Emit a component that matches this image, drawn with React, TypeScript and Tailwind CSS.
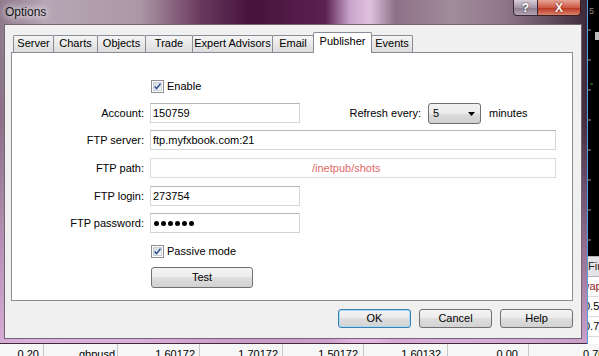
import React from "react";

const CheckBox = () => (
  <div className="w-[13px] h-[13px] shrink-0 border border-[#8e8f8f] bg-white p-px">
    <div className="w-full h-full border border-[#c9cfd7] bg-[linear-gradient(135deg,#d3dbe5,#f7f9fb)] flex items-center justify-center">
      <svg width="9" height="9" viewBox="0 0 9 9">
        <path d="M0.8 4.4 L3.3 7.2 L8.3 0.8" stroke="#2e4f8f" strokeWidth="1.9" fill="none" />
      </svg>
    </div>
  </div>
);

const TextBox = ({ w, children }: { w: string; children?: React.ReactNode }) => (
  <div
    className={
      w === "short"
        ? "w-[150px] h-[20px] border border-[#d2d4d8] border-t-[#b3b6bc] bg-white pl-[2px] leading-[18px] flex items-center"
        : "w-[406px] h-[20px] border border-[#d2d4d8] border-t-[#b3b6bc] bg-white pl-[2px] leading-[18px] flex items-center"
    }
  >
    {children}
  </div>
);

const Label = ({ children }: { children: React.ReactNode }) => (
  <div className="w-[132px] mr-[6px] h-[20px] leading-[20px] text-right">{children}</div>
);

const tabs = [
  { name: "Server", w: "w-[41px]" },
  { name: "Charts", w: "w-[45px]" },
  { name: "Objects", w: "w-[49px]" },
  { name: "Trade", w: "w-[48px]" },
  { name: "Expert Advisors", w: "w-[81px]" },
  { name: "Email", w: "w-[42px]" },
  { name: "Publisher", w: "w-[59px]", active: true },
  { name: "Events", w: "w-[42px]" },
];

const btnBase =
  "w-[73px] h-[19px] rounded-[3px] border bg-[linear-gradient(to_bottom,#f4f4f4_0%,#ececec_45%,#dedede_50%,#d2d2d2_100%)] flex items-center justify-center leading-[13px]";

const bottomCols = [
  { t: "0.20", c: "w-[44px] border-r border-[#c6c6c6] text-right pr-[4px]" },
  { t: "gbpusd", c: "w-[74px] border-r border-[#c6c6c6] text-right pr-[2px]" },
  { t: "1.60172", c: "w-[82px] border-r border-[#c6c6c6] text-right pr-[4px]" },
  { t: "1.70172", c: "w-[83px] border-r border-[#c6c6c6] text-right pr-[4px]" },
  { t: "1.50172", c: "w-[81px] border-r border-[#c6c6c6] text-right pr-[5px]" },
  { t: "1.60132", c: "w-[84px] border-r border-[#c6c6c6] text-right pr-[6px]" },
  { t: "0.00", c: "w-[81px] border-r border-[#c6c6c6] text-right pr-[10px]" },
  { t: "0.70172", c: "w-[120px] text-left pl-[54px]" },
];

export default function App() {
  return (
    <div className="relative w-[599px] h-[356px] overflow-hidden bg-[#f0f0f0] font-['Liberation_Sans',Arial,sans-serif] text-[11px] text-black">
      {/* application behind the dialog */}
      <div className="flex flex-col h-full">
        <div className="flex h-[344px]">
          <div className="flex-1 bg-[#2a1a28]" />
          <div className="w-[12px] flex flex-col border-l border-[#5e9ad6] bg-black overflow-hidden">
            <div className="h-[18px] pl-[1px] pt-[6px] text-[9px] leading-[10px] text-[#8a8a8a]">5</div>
            <svg width="11" height="238" className="shrink-0">
              <rect x="7" y="14" width="4" height="8" fill="#bdbdbd" />
              <line x1="0" y1="12" x2="3" y2="12" stroke="#9a9a9a" />
              <line x1="0" y1="42" x2="3" y2="42" stroke="#9a9a9a" />
              <line x1="2" y1="66" x2="5" y2="66" stroke="#3aa03a" />
              <line x1="0" y1="72" x2="3" y2="72" stroke="#9a9a9a" />
              <line x1="0" y1="102" x2="3" y2="102" stroke="#9a9a9a" />
              <line x1="0" y1="132" x2="3" y2="132" stroke="#9a9a9a" />
              <line x1="0" y1="162" x2="3" y2="162" stroke="#9a9a9a" />
              <line x1="0" y1="192" x2="3" y2="192" stroke="#9a9a9a" />
              <line x1="0" y1="222" x2="3" y2="222" stroke="#9a9a9a" />
            </svg>
            <div className="h-[21px] shrink-0 bg-[#e4e3e8] border-y border-[#b4b4b4] leading-[19px] text-[#222] whitespace-nowrap">Fin</div>
            <div className="h-[20px] shrink-0 bg-white border-b border-[#dcdcdc] leading-[19px] text-[#8b1a1a] whitespace-nowrap -ml-[4px]">vap</div>
            <div className="h-[20px] shrink-0 bg-white border-b border-[#dcdcdc] leading-[19px] whitespace-nowrap -ml-[4px]">0.50</div>
            <div className="h-[20px] shrink-0 bg-white border-b border-[#dcdcdc] leading-[19px] whitespace-nowrap -ml-[4px]">0.70</div>
            <div className="flex-1 bg-white" />
          </div>
        </div>
        <div className="h-[12px] flex bg-[#f6f6f6] leading-[13px] pt-[4px] whitespace-nowrap">
          {bottomCols.map((c, i) => (
            <div key={i} className={c.c + " shrink-0 -mt-[4px] pt-[4px]"}>
              {c.t}
            </div>
          ))}
        </div>
      </div>

      {/* Options dialog window */}
      <div className="absolute left-0 top-0 w-[587px] h-[344px] flex flex-col border-b border-[#3e2c3b] bg-[linear-gradient(to_bottom,rgba(0,0,0,0)_0px,rgba(0,0,0,0)_40px,rgba(110,60,100,0.15)_120px,rgba(228,180,228,0.85)_100%),linear-gradient(to_right,#8e788c_0px,#b7a6b5_45px,#ab98a6_140px,#6a3a5e_200px,#46133d_250px,#5a2050_325px,#c9a4cc_350px,#e0c2e0_370px,#8e7088_395px,#a08c9a_450px,#8f778b_505px,#3c2a3a_587px)]">
        {/* title bar */}
        <div className="h-[24px] flex items-start shrink-0">
          <div className="pl-[5px] pt-[5px] text-[12px] leading-[14px] text-[#151515] [text-shadow:0_0_6px_#ffffff,0_0_10px_#ffffff]">
            Options
          </div>
          <div className="ml-auto mr-[6px] flex">
            <div className="w-[25px] h-[16px] rounded-bl-[4px] border border-t-0 border-[#3a2838] bg-[linear-gradient(to_bottom,#d8ccd8,#a596a6_50%,#8a7a8c_51%,#b3a4b4)] flex items-center justify-center text-[12px] font-bold leading-[14px] text-white [text-shadow:0_0_2px_#222]">
              ?
            </div>
            <div className="w-[43px] h-[16px] rounded-br-[4px] border border-t-0 border-l-0 border-[#3a2020] bg-[linear-gradient(to_bottom,#e7a598,#cf5a47_50%,#b8321f_51%,#d9806c)] flex items-center justify-center text-[12px] font-bold leading-[14px] text-[#fff4ee] [text-shadow:0_0_2px_#5a1010]">
              X
            </div>
          </div>
        </div>

        {/* client area */}
        <div className="ml-[4px] w-[578px] h-[315px] border border-[#756574] bg-[#f0f0f0] flex flex-col pl-[6px] pt-[7px]">
          {/* tab strip */}
          <div className="h-[20px] flex items-end pl-[2px]">
            {tabs.map((t, i) =>
              t.active ? (
                <div
                  key={t.name}
                  className={t.w + " h-[21px] -mb-px -ml-px relative z-10 border border-b-0 border-[#898c95] rounded-t-[2px] bg-white text-center pt-[2px] leading-[13px] whitespace-nowrap"}
                >
                  {t.name}
                </div>
              ) : (
                <div
                  key={t.name}
                  className={
                    t.w +
                    (i === 0 ? "" : " -ml-px") +
                    " h-[17px] border border-b-0 border-[#898c95] rounded-t-[2px] bg-[linear-gradient(to_bottom,#f5f5f5,#e6e6e6_60%,#dcdcdc)] text-center leading-[15px] whitespace-nowrap"
                  }
                >
                  {t.name}
                </div>
              )
            )}
          </div>

          {/* tab panel */}
          <div className="w-[562px] h-[249px] border border-[#898c95] bg-white flex flex-col pt-[27px]">
            <div className="flex items-center gap-[3px] pl-[139px] h-[13px]">
              <CheckBox />
              <span className="leading-[13px]">Enable</span>
            </div>

            <div className="flex items-start mt-[10px] h-[21px]">
              <Label>Account:</Label>
              <TextBox w="short">150759</TextBox>
              <div className="w-[121px] h-[20px] leading-[20px] text-right">Refresh every:</div>
              <div className="ml-[7px] w-[53px] h-[21px] rounded-[3px] border border-[#707070] bg-[linear-gradient(to_bottom,#f2f2f2,#ebebeb_50%,#dddddd_51%,#cfcfcf)] flex items-center pl-[4px] pr-[4px]">
                <span className="leading-[13px]">5</span>
                <svg width="7" height="4" viewBox="0 0 7 4" className="ml-auto mr-[1px]">
                  <path d="M0 0 H7 L3.5 4 Z" fill="#000" />
                </svg>
              </div>
              <div className="ml-[8px] h-[20px] leading-[20px]">minutes</div>
            </div>

            <div className="flex items-start mt-[6px]">
              <Label>FTP server:</Label>
              <TextBox w="long">ftp.myfxbook.com:21</TextBox>
            </div>

            <div className="flex items-start mt-[8px]">
              <Label>FTP path:</Label>
              <div className="w-[406px] h-[20px] border border-[#dadcdf] bg-white pl-[161px] leading-[18px] text-[#e26a6a]">
                /inetpub/shots
              </div>
            </div>

            <div className="flex items-start mt-[8px]">
              <Label>FTP login:</Label>
              <TextBox w="short">273754</TextBox>
            </div>

            <div className="flex items-start mt-[7px]">
              <Label>FTP password:</Label>
              <TextBox w="short">
                <div className="flex gap-[2px] pl-px">
                  <span className="w-[5px] h-[5px] rounded-full bg-black" />
                  <span className="w-[5px] h-[5px] rounded-full bg-black" />
                  <span className="w-[5px] h-[5px] rounded-full bg-black" />
                  <span className="w-[5px] h-[5px] rounded-full bg-black" />
                  <span className="w-[5px] h-[5px] rounded-full bg-black" />
                  <span className="w-[5px] h-[5px] rounded-full bg-black" />
                </div>
              </TextBox>
            </div>

            <div className="flex items-center gap-[3px] pl-[139px] h-[13px] mt-[12px]">
              <CheckBox />
              <span className="leading-[13px]">Passive mode</span>
            </div>

            <div className="ml-[139px] mt-[9px] w-[102px] h-[21px] rounded-[3px] border border-[#707070] bg-[linear-gradient(to_bottom,#f4f4f4_0%,#ececec_45%,#dedede_50%,#d2d2d2_100%)] flex items-center justify-center leading-[13px]">
              Test
            </div>
          </div>

          {/* dialog buttons */}
          <div className="w-[562px] mt-[8px] flex justify-end gap-[8px]">
            <div className={btnBase + " border-[#3c7fb1] shadow-[inset_0_0_0_1px_#a8dcf4]"}>OK</div>
            <div className={btnBase + " border-[#707070]"}>Cancel</div>
            <div className={btnBase + " border-[#707070]"}>Help</div>
          </div>
        </div>
      </div>
    </div>
  );
}
